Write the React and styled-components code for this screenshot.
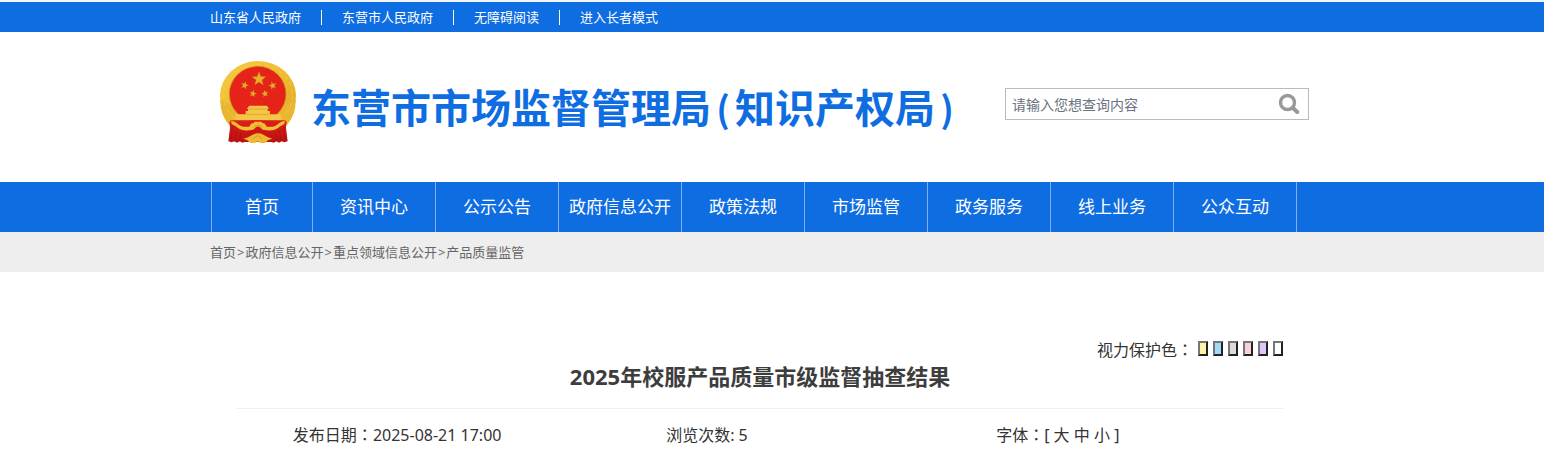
import styled, { createGlobalStyle } from "styled-components"

const topLinks = ["山东省人民政府", "东营市人民政府", "无障碍阅读", "进入长者模式"]
const menu = ["首页", "资讯中心", "公示公告", "政府信息公开", "政策法规", "市场监管", "政务服务", "线上业务", "公众互动"]
const crumbs = ["首页", "政府信息公开", "重点领域信息公开", "产品质量监管"]
const eyeColors = [
    { name: "黄色", value: "#faf5a8" },
    { name: "蓝色", value: "#9fdcf7" },
    { name: "灰色", value: "#dcdcdc" },
    { name: "粉色", value: "#f9d0dc" },
    { name: "紫色", value: "#dfc6fb" },
    { name: "白色", value: "#ffffff" },
]

export default function App() {
    return (
        <>
            <GlobalStyle />
            <TopBar>
                <Container>
                    <TopList>
                        {topLinks.map((t) => <li key={t}><a href="#">{t}</a></li>)}
                    </TopList>
                </Container>
            </TopBar>

            <Header>
                <HeaderInner>
                    <Brand href="#">
                        <Emblem />
                        <SiteName>东营市市场监督管理局<Paren>(</Paren>知识产权局<Paren>)</Paren></SiteName>
                    </Brand>
                    <SearchForm onSubmit={(e) => e.preventDefault()}>
                        <SearchInput type="text" aria-label="搜索" placeholder="请输入您想查询内容" />
                        <SearchButton type="submit" aria-label="查询">
                            <svg width="22" height="22" viewBox="0 0 22 22" fill="none" stroke="#999">
                                <circle cx="9.5" cy="9.5" r="7" strokeWidth="3.4" />
                                <path d="M15 15l4.2 4" strokeWidth="4" strokeLinecap="round" />
                            </svg>
                        </SearchButton>
                    </SearchForm>
                </HeaderInner>
            </Header>

            <NavBar>
                <Container>
                    <NavList>
                        {menu.map((m) => <li key={m}><a href="#">{m}</a></li>)}
                    </NavList>
                </Container>
            </NavBar>

            <CrumbBar>
                <Container>
                    {crumbs.map((c, i) => (
                        <span key={c}>{i > 0 && <Arrow>&gt;</Arrow>}<a href="#">{c}</a></span>
                    ))}
                </Container>
            </CrumbBar>

            <Main>
                <Article>
                    <EyeCare>
                        <span>视力保护色<Colon>：</Colon></span>
                        <Swatches>
                            {eyeColors.map((c) => <Swatch key={c.name} type="button" aria-label={c.name} $color={c.value} />)}
                        </Swatches>
                    </EyeCare>
                    <Title>2025年校服产品质量市级监督抽查结果</Title>
                    <Meta>
                        <span>发布日期<Colon>：</Colon>2025-08-21 17:00</span>
                        <span>浏览次数: 5</span>
                        <span>字体<Colon>：</Colon>[ <a href="#">大</a> <a href="#">中</a> <a href="#">小</a> ]</span>
                    </Meta>
                </Article>
            </Main>
        </>
    )
}

function Star({ x, y, r, turn = 0 }) {
    const points = Array.from({ length: 10 }, (_, i) => {
        const d = i % 2 ? r * 0.42 : r
        const a = (Math.PI / 5) * i - Math.PI / 2 + turn
        return `${(x + d * Math.cos(a)).toFixed(1)},${(y + d * Math.sin(a)).toFixed(1)}`
    })
    return <polygon points={points.join(" ")} fill="#e8b02a" stroke="#c07a1c" strokeWidth="1" />
}

function Emblem() {
    return (
        <svg width="78" height="84" viewBox="26 31 234 252" aria-hidden="true">
            <defs>
                <linearGradient id="gold" x1="0" y1="0" x2="1" y2="1">
                    <stop offset="0" stopColor="#f6cb45" />
                    <stop offset="0.5" stopColor="#efbc30" />
                    <stop offset="1" stopColor="#dfa724" />
                </linearGradient>
                <linearGradient id="drape" x1="0" y1="0" x2="0" y2="1">
                    <stop offset="0" stopColor="#dc2019" />
                    <stop offset="1" stopColor="#bb1011" />
                </linearGradient>
            </defs>
            <ellipse cx="143" cy="135" rx="114" ry="104" fill="url(#gold)" />
            <path d="M30 148q-1 45 26 74l24 10V170zM256 148q1 45-26 74l-24 10V170z" fill="#eab630" />
            <ellipse cx="143" cy="135" rx="103" ry="94" fill="none" stroke="#f9d768" strokeWidth="3" strokeDasharray="14 9" opacity="0.4" />
            <ellipse cx="142" cy="130" rx="85" ry="83" fill="#e62318" stroke="#cf8d18" strokeWidth="2" />
            <Star x={146} y={85} r={22} />
            <Star x={103} y={104} r={12} turn={0.3} />
            <Star x={187} y={105} r={12} turn={-0.3} />
            <Star x={128} y={129} r={11} turn={0.2} />
            <Star x={164} y={129} r={11} turn={-0.2} />
            <path d="M117 165h53l6 9h-4v7h7v10h33v18H75v-18h31v-10h7v-7h-4z" fill="#f5c548" />
            <path d="M113 175h59M106 191h73" stroke="#d9962a" strokeWidth="2" />
            <path d="M62 209h162l5 4-2 18 5 41-10 3-8-3-8 4-8-4-8 4-7-2H103l-7 2-8-4-8 4-8-4-8 3-10-3 5-41-2-18z" fill="url(#drape)" />
            <path d="M66 228l-4 40M78 238l-4 34M91 246l-3 26M220 228l4 40M208 238l4 34M195 246l3 26" fill="none" stroke="#a30f10" strokeWidth="2" />
            <path d="M62 210q12 2 20 9 13 12 34 9l8-10 5 0 4-5h20l4 5 5 0 8 10q21 3 34-9 8-7 20-9l-2 10q-12 5-20 13-14 9-32 6l-13-2-6-6q-8-7-16 0l-6 6-13 2q-18 3-32-6-8-8-20-13z" fill="#f2be38" />
            <path d="M129 230q14-14 28 0" fill="none" stroke="#c98a1e" strokeWidth="2" />
            <path d="M99 264l14-4 14-8q16-8 32 0l14 8 13 4-12 4-10 9h-14l-8-5-8 5h-14l-10-9z" fill="#efb932" />
            <path d="M129 263l13-8 13 8" fill="none" stroke="#c98a1e" strokeWidth="2" />
        </svg>
    )
}

const GlobalStyle = createGlobalStyle`
    * {
        box-sizing: border-box;
    }
    body {
        margin: 0;
        background: #fff;
        color: #333;
        font-family: 'Noto Sans', 'Noto Sans CJK SC', sans-serif;
    }
    ul, h1, h2 {
        margin: 0;
        padding: 0;
        list-style: none;
    }
    a {
        color: inherit;
        text-decoration: none;
    }
`
// the page keeps a 24px gutter on the right, so content centres on the rest
const Band = styled.div`
    padding-right: 24px;
`
const Container = styled.div`
    max-width: 1100px;
    margin: 0 auto;
`
const TopBar = styled(Band)`
    border-top: 2px solid #f1f6fc;
    background-color: #0f6de2;
    background-clip: padding-box;
    color: #fff;
    font-size: 13px;
    line-height: 30px;
`
const TopList = styled.ul`
    display: flex;
    li {
        display: flex;
        align-items: center;
    }
    li + li::before {
        content: "";
        height: 15px;
        border-left: 1px solid #fff;
        margin: 0 20px;
    }
`
const Header = styled(Band)`
    height: 150px;
`
const HeaderInner = styled(Container)`
    display: flex;
    justify-content: space-between;
    align-items: flex-start;
    padding: 29px 1px 0 9px;
`
const Brand = styled.a`
    display: flex;
    align-items: center;
    gap: 14px;
`
const SiteName = styled.h1`
    color: #0f6de2;
    font-family: 'Noto Sans CJK SC', sans-serif;
    font-size: 40px;
    font-weight: 700;
    line-height: 60px;
    margin-top: 6px;
    white-space: nowrap;
`
const Paren = styled.span`
    display: inline-block;
    width: 24px;
    font-size: 36px;
    line-height: 1;
    text-align: center;
`
const SearchForm = styled.form`
    display: flex;
    width: 304px;
    height: 32px;
    margin-top: 27px;
    border: 1px solid #bbb;
`
const SearchInput = styled.input`
    flex: 1;
    min-width: 0;
    border: 0;
    outline: 0;
    padding: 0 6px;
    font-family: inherit;
    font-size: 14px;
    background: transparent;
    &::placeholder {
        color: #6b7280;
    }
`
const SearchButton = styled.button`
    display: flex;
    align-items: center;
    justify-content: center;
    width: 38px;
    border: 0;
    padding: 0;
    background: transparent;
`
const NavBar = styled(Band)`
    background-color: #0f6de2;
`
const NavList = styled.ul`
    display: flex;
    margin-left: 1px;
    border-left: 1px solid #7fb1f0;
    width: fit-content;
    li {
        width: 123px;
        border-right: 1px solid #7fb1f0;
        color: #fff;
        font-size: 17px;
        line-height: 50px;
        text-align: center;
        white-space: nowrap;
    }
    li:first-child {
        width: 101px;
    }
    a {
        display: block;
    }
`
const CrumbBar = styled(Band)`
    background-color: #eee;
    color: #666;
    font-size: 13px;
    line-height: 40px;
`
const Arrow = styled.span`
    margin: 0 1px;
`
const Main = styled(Band)`
    padding-top: 64px;
`
const Article = styled.div`
    max-width: 1046px;
    margin: 0 auto;
`
const EyeCare = styled.div`
    display: flex;
    justify-content: flex-end;
    align-items: center;
    gap: 5px;
    font-size: 16px;
    line-height: 28px;
`
const Colon = styled.span`
    font-family: 'Noto Sans CJK TC', sans-serif;
    line-height: 1;
`
const Swatches = styled.div`
    display: flex;
    gap: 5px;
    padding-bottom: 3px;
`
const Swatch = styled.button`
    width: 10px;
    height: 15px;
    padding: 0;
    border: 2px solid;
    border-color: #767676 #222 #222 #767676;
    background-color: ${(props) => props.$color};
`
const Title = styled.h2`
    padding-bottom: 20px;
    border-bottom: 1px solid #eee;
    color: #3d3d3d;
    font-size: 22px;
    font-weight: 700;
    line-height: 24px;
    text-align: center;
`
const Meta = styled.div`
    display: grid;
    grid-template-columns: 320fr 299fr 402fr;
    padding: 14px 24px 0 0;
    font-size: 16px;
    line-height: 24px;
    text-align: center;
`
